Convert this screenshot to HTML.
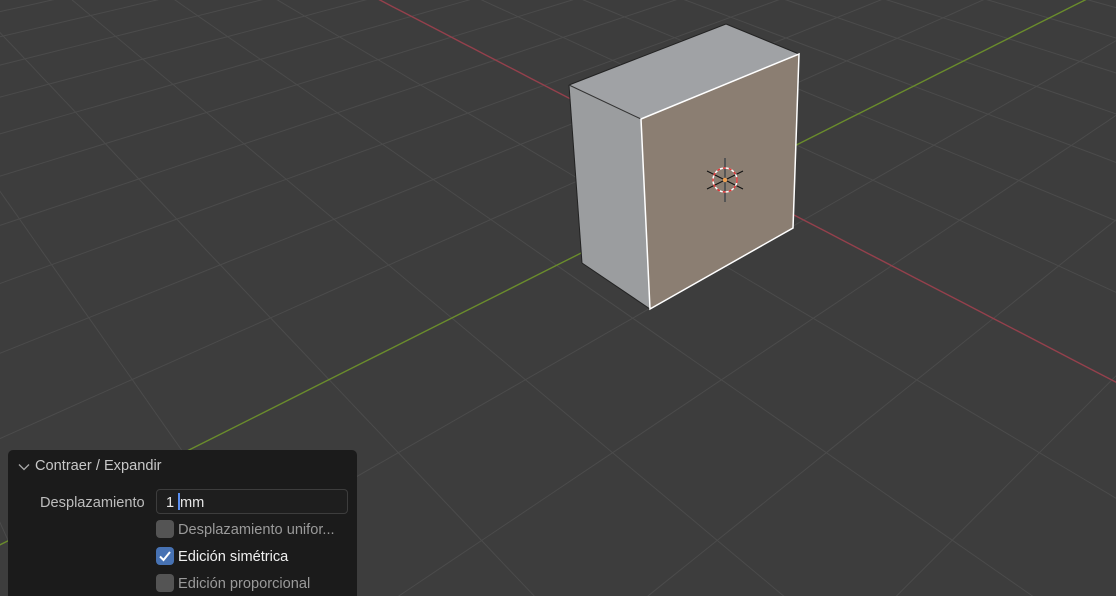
<!DOCTYPE html>
<html><head><meta charset="utf-8"><style>
html,body{margin:0;padding:0;background:#3d3d3d;width:1116px;height:596px;overflow:hidden;font-family:"Liberation Sans","DejaVu Sans",sans-serif}
svg{position:absolute;left:0;top:0;overflow:hidden}
#panel{position:absolute;left:8px;top:450px;width:349px;height:146px;background:#1b1b1b;border-radius:5px 5px 0 0;color:#c4c4c4;font-size:14.6px;overflow:hidden}
.t{position:absolute;white-space:nowrap}
.cb{position:absolute;left:148px;width:18px;height:18px;border-radius:4px;background:#545454}
</style></head><body>
<svg id="s" width="1116" height="596" viewBox="0 0 1116 596"></svg>
<div id="panel">
  <svg width="14" height="14" style="position:absolute;left:9px;top:10px" viewBox="0 0 14 14"><path d="M2 4.5 L7 9.5 L12 4.5" fill="none" stroke="#aaa" stroke-width="1.3"/></svg>
  <div class="t" style="left:27px;top:8px;color:#c8c8c8">Contraer / Expandir</div>
  <div class="t" style="left:32px;top:45px;color:#bdbdbd">Desplazamiento</div>
  <div style="position:absolute;left:148px;top:39px;width:192px;height:25px;background:#1e1e1e;border:1px solid #3d3d3d;border-radius:4px;box-sizing:border-box"></div>
  <div class="t" style="left:158px;top:45px;color:#e6e6e6">1</div>
  <div style="position:absolute;left:170px;top:43px;width:2px;height:17px;background:#5a8ef0"></div>
  <div class="t" style="left:172px;top:45px;color:#e6e6e6">mm</div>
  <div class="cb" style="top:70px"></div>
  <div class="t" style="left:170px;top:72px;color:#9a9a9a">Desplazamiento unifor...</div>
  <div class="cb" style="top:97px;background:#4772b3"><svg width="18" height="18" viewBox="0 0 18 18"><path d="M4 9.5 L7.5 13 L14 5" fill="none" stroke="#fff" stroke-width="2"/></svg></div>
  <div class="t" style="left:170px;top:99px;color:#f0f0f0">Edición simétrica</div>
  <div class="cb" style="top:124px"></div>
  <div class="t" style="left:170px;top:126px;color:#9a9a9a">Edición proporcional</div>
</div>
<script>
var s=document.getElementById('s');var NS='http://www.w3.org/2000/svg';
function P(u,v){var w=1-0.0625*u-0.0634*v;return [w,(726.6+26.82*u-120.25*v)/w,(180+26.25*u+25.84*v)/w];}
function line(f,col,wd){var pts=[];for(var t=-80;t<=80;t+=0.25){var p=f(t);if(p[0]>0.03)pts.push(p[1].toFixed(1)+','+p[2].toFixed(1));}
 var e=document.createElementNS(NS,'polyline');e.setAttribute('points',pts.join(' '));e.setAttribute('fill','none');e.setAttribute('stroke',col);e.setAttribute('stroke-width',wd);s.appendChild(e);}
for(var k=-60;k<=20;k++){if(k==0)continue;(function(k){line(function(t){return P(k,t)},'#4b4b4b',1);line(function(t){return P(t,k)},'#4b4b4b',1);})(k);}
line(function(t){return P(t,0)},'#94404c',1.4);
line(function(t){return P(0,t)},'#6a8c2c',1.4);
var cube='<polygon points="569,85 641,119 650,309 582,263" fill="#9b9d9f"/>'+
'<polygon points="569,85 726,24 799,54 641,119" fill="#a0a2a5"/>'+
'<polygon points="641,119 799,54 793,228 650,309" fill="#8b7e72"/>'+
'<line x1="582" y1="263" x2="650" y2="309" stroke="#222" stroke-width="1"/>'+
'<line x1="569" y1="85" x2="582" y2="263" stroke="#222" stroke-width="1"/>'+
'<line x1="569" y1="85" x2="726" y2="24" stroke="#222" stroke-width="1"/>'+
'<line x1="569" y1="85" x2="641" y2="119" stroke="#333" stroke-width="1"/>'+
'<line x1="726" y1="24" x2="799" y2="54" stroke="#222" stroke-width="1"/>'+
'<polygon points="641,119 799,54 793,228 650,309" fill="none" stroke="#fff" stroke-width="1.5"/>'+
'<line x1="725" y1="158" x2="725" y2="202" stroke="#555" stroke-width="2"/>'+
'<line x1="707" y1="171" x2="743" y2="189" stroke="#111" stroke-width="1"/>'+
'<line x1="707" y1="189" x2="743" y2="171" stroke="#111" stroke-width="1"/>'+
'<circle cx="725" cy="180" r="12" fill="none" stroke="#fff" stroke-width="1.5"/>'+
'<circle cx="725" cy="180" r="12" fill="none" stroke="#d33" stroke-width="1.5" stroke-dasharray="3 3"/>'+
'<circle cx="725" cy="180" r="2.2" fill="#f0a050"/>';
s.insertAdjacentHTML('beforeend',cube);
</script>
</body></html>
